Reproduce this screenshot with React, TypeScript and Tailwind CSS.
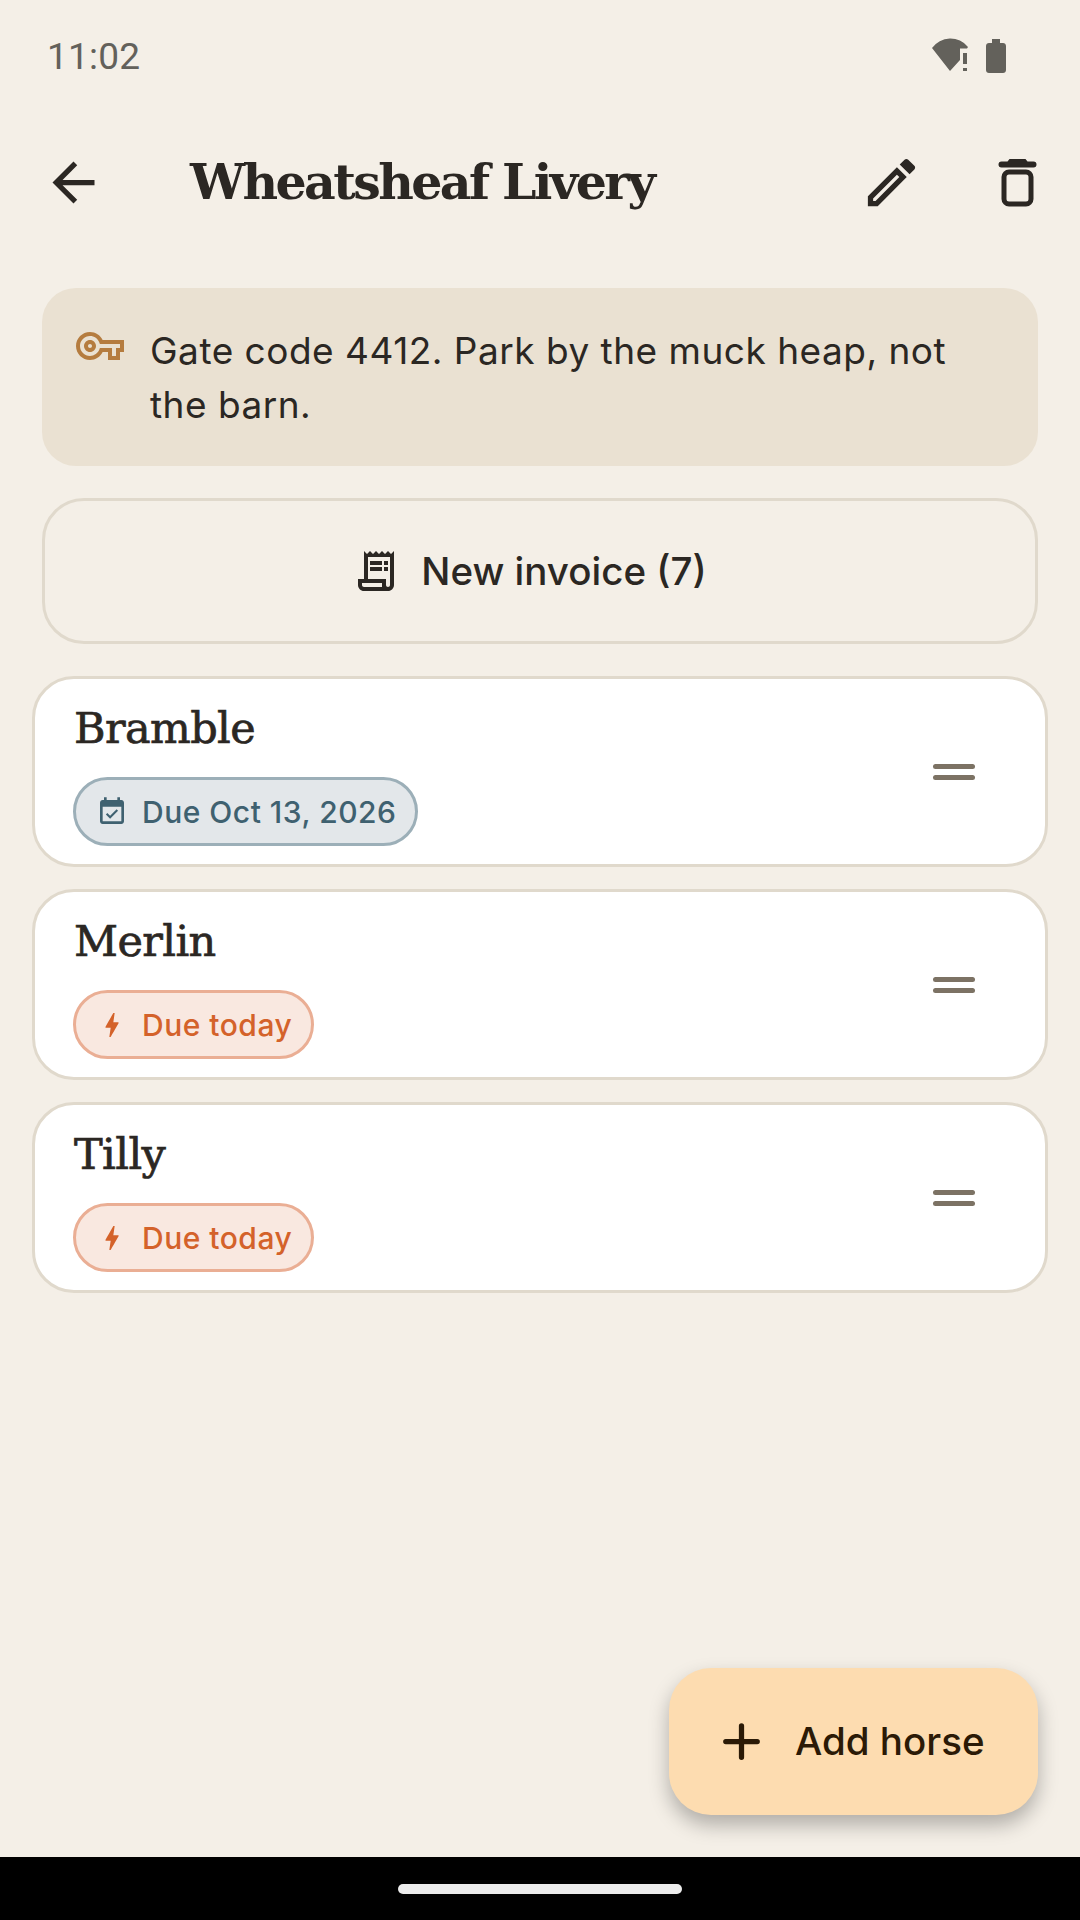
import type { ReactNode } from "react";

const horses = [
  { name: "Bramble", due: "Due Oct 13, 2026", tone: "calm" },
  { name: "Merlin", due: "Due today", tone: "urgent" },
  { name: "Tilly", due: "Due today", tone: "urgent" },
];

function Icon({ size, className, children }: { size: number; className?: string; children: ReactNode }) {
  return (
    <svg width={size} height={size} viewBox="0 0 24 24" fill="currentColor" className={`shrink-0 ${className ?? ""}`}>
      {children}
    </svg>
  );
}

function StatusBar() {
  return (
    <div className="flex h-[111px] items-center justify-between pl-[47px] pr-[74px] pt-[1px] text-[#63615b]">
      <span className="font-['Roboto',sans-serif] text-[37px] leading-none tracking-[0.2px]">11:02</span>
      <div className="flex items-center gap-[16px]">
        <svg width="40" height="36" viewBox="0 0 40 36" fill="currentColor" className="mb-[2px]">
          <path d="M2 11A22.500 22.500 0 0 1 38 10L37 11.500H30V23L20 34Z" />
          <rect x="33" y="16" width="4" height="11" />
          <rect x="33" y="31" width="4" height="3" />
        </svg>
        <svg width="20" height="34" viewBox="0 0 20 34" fill="currentColor">
          <path d="M6 0H14V4H17C18.700 4 20 5.300 20 7V31C20 32.700 18.700 34 17 34H3C1.300 34 0 32.700 0 31V7C0 5.300 1.300 4 3 4H6Z" />
        </svg>
      </div>
    </div>
  );
}

function TopBar() {
  return (
    <div className="flex h-[142px] items-center pl-[42px] pr-[31px] text-[#2b2723]">
      <Icon size={63}>
        <path d="M20 11H7.830l5.590-5.590L12 4l-8 8 8 8 1.410-1.410L7.830 13H20v-2z" />
      </Icon>
      <h1 className="ml-[85px] flex-1 font-['DejaVu_Serif',serif] text-[49px] font-bold leading-none tracking-[-2.6px]">
        Wheatsheaf Livery
      </h1>
      <Icon size={63} className="mr-[63px]">
        <path d="M3 17.250V21h3.750L17.810 9.940l-3.750-3.750L3 17.250zM5.920 19H5v-.920l9.060-9.060.920.920L5.920 19zM20.710 5.630l-2.340-2.340c-.200-.200-.450-.290-.710-.290s-.510.100-.700.290l-1.830 1.830 3.750 3.750 1.830-1.830c.390-.390.390-1.020 0-1.410z" />
      </Icon>
      <svg width="63" height="63" viewBox="0 0 63 63" className="shrink-0">
        <path d="M12.500 13.500a3 3 0 0 1 3-3h6l2-2.500h16l2 2.500h6a3 3 0 0 1 0 6h-32a3 3 0 0 1-3-3z" fill="currentColor" />
        <rect x="18" y="21" width="27" height="32" rx="5" fill="none" stroke="currentColor" strokeWidth="5" />
      </svg>
    </div>
  );
}

function GateNote() {
  return (
    <div className="mx-[42px] mt-[35px] flex h-[178px] rounded-[34px] bg-[#eae1d2] pl-[34px] pr-[60px] pt-[36px]">
      <Icon size={48} className="mt-[-2px] text-[#b57c3f]">
        <path d="M22 19h-6v-4h-2.680c-1.140 2.420-3.600 4-6.320 4-3.860 0-7-3.140-7-7s3.140-7 7-7c2.720 0 5.170 1.580 6.320 4H24v6h-2v4zm-4-2h2v-4h2v-2H11.940l-.230-.670C11.010 8.340 9.110 7 7 7c-2.760 0-5 2.240-5 5s2.240 5 5 5c2.110 0 4.010-1.340 4.710-3.330l.230-.670H18v4zM7 15c-1.650 0-3-1.350-3-3s1.350-3 3-3 3 1.350 3 3-1.350 3-3 3zm0-4c-.550 0-1 .450-1 1s.450 1 1 1 1-.450 1-1-.450-1-1-1z" />
      </Icon>
      <p className="ml-[26px] font-['Inter',sans-serif] text-[37px] leading-[54px] tracking-[0.5px] text-[#2b2723]">
        Gate code 4412. Park by the muck heap, not the barn.
      </p>
    </div>
  );
}

function InvoiceButton() {
  return (
    <button
      type="button"
      className="mx-[42px] mt-[32px] flex h-[146px] items-center justify-center gap-[21px] rounded-[42px] border-[3px] border-[#e0d9cc] pr-[21px] text-[#2b2723]"
    >
      <Icon size={48}>
        <path d="M19.500 3.500 18 2l-1.500 1.500L15 2l-1.500 1.500L12 2l-1.500 1.500L9 2 7.500 3.500 6 2v14H3v3c0 1.660 1.340 3 3 3h12c1.660 0 3-1.340 3-3V2l-1.500 1.500zM19 19c0 .550-.450 1-1 1s-1-.450-1-1v-3H8V5h11v14zM15 7H9v2h6V7zm3 0h-2v2h2V7zm-3 3H9v2h6v-2zm3 0h-2v2h2v-2zM6 20c-.550 0-1-.450-1-1v-1h10v2H6z" />
      </Icon>
      <span className="font-['Inter',sans-serif] text-[38.5px] font-medium leading-none">New invoice (7)</span>
    </button>
  );
}

function DueChip({ due, tone }: { due: string; tone: string }) {
  const urgent = tone === "urgent";
  return (
    <div
      className={`ml-[-1px] flex h-[69px] w-fit items-center rounded-full border-[3px] pl-[20px] pr-[19px] ${
        urgent ? "border-[#eaae94] bg-[#f9e8e0] text-[#d4622a]" : "border-[#9cafb8] bg-[#e3e7ea] text-[#3f6170]"
      }`}
    >
      <Icon size={32}>
        {urgent ? (
          <path d="M11 21h-1l1-7H7.500c-.580 0-.570-.320-.380-.660.190-.340.050-.080.070-.120C8.480 10.940 10.420 7.540 13 3h1l-1 7h3.500c.490 0 .560.330.470.510l-.070.150C12.960 17.550 11 21 11 21z" />
        ) : (
          <path d="M16.530 11.060 15.470 10l-4.880 4.880-2.120-2.120-1.060 1.060L10.590 17l5.940-5.940zM19 3h-1V1h-2v2H8V1H6v2H5c-1.110 0-1.990.900-1.990 2L3 19c0 1.100.890 2 2 2h14c1.100 0 2-.900 2-2V5c0-1.100-.900-2-2-2zm0 16H5V8h14v11z" />
        )}
      </Icon>
      <span className="ml-[14px] font-['Inter',sans-serif] text-[30px] font-medium leading-none tracking-[0.5px]">{due}</span>
    </div>
  );
}

function HorseCard({ name, due, tone }: { name: string; due: string; tone: string }) {
  return (
    <div className="flex h-[191px] rounded-[42px] border-[3px] border-[#e0d9cc] bg-white pl-[39px] pr-[70px] pt-[21px]">
      <div className="flex-1">
        <div className="font-['DejaVu_Serif',serif] text-[43px] leading-[56px] tracking-[-0.6px] text-[#2b2723] [-webkit-text-stroke:0.7px_#2b2723]">
          {name}
        </div>
        <div className="mt-[21px]">
          <DueChip due={due} tone={tone} />
        </div>
      </div>
      <div className="mb-[21px] flex w-[42px] flex-col justify-center gap-[6px] self-center">
        <div className="h-[5px] rounded-full bg-[#7c7264]" />
        <div className="h-[5px] rounded-full bg-[#7c7264]" />
      </div>
    </div>
  );
}

export default function App() {
  return (
    <div className="relative flex h-[1920px] w-[1080px] flex-col overflow-hidden bg-[#f4efe7]">
      <StatusBar />
      <TopBar />
      <GateNote />
      <InvoiceButton />
      <div className="mx-[32px] mt-[32px] flex flex-col gap-[22px]">
        {horses.map((horse) => (
          <HorseCard key={horse.name} {...horse} />
        ))}
      </div>

      <button
        type="button"
        className="absolute bottom-[105px] right-[42px] flex h-[147px] w-[369px] items-center rounded-[42px] bg-[#fddcb0] pl-[41px] text-[#2b1a06] shadow-[0_10px_20px_rgba(0,0,0,0.28)]"
      >
        <svg width="63" height="63" viewBox="0 0 24 24" className="shrink-0" fill="none" stroke="currentColor" strokeWidth="2" strokeLinecap="round">
          <path d="M6 12h12M12 6v12" />
        </svg>
        <span className="ml-[22px] font-['Inter',sans-serif] text-[38.5px] font-medium leading-none">Add horse</span>
      </button>

      <div className="mt-auto flex h-[63px] items-center justify-center bg-black">
        <div className="h-[10px] w-[284px] rounded-full bg-[#ececec]" />
      </div>
    </div>
  );
}
